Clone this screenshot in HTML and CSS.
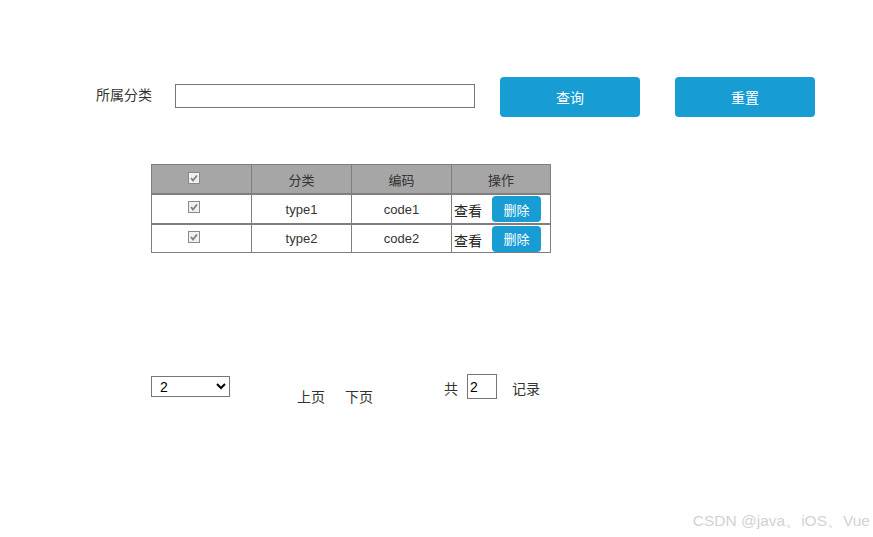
FILE: index.html
```html
<!DOCTYPE html>
<html>
<head>
<meta charset="utf-8">
<link rel="stylesheet" href="styles.css">
</head>
<body>
<div class="page">
  <div class="search">
    <span class="label">所属分类</span>
    <input class="search-input" type="text">
    <button class="btn btn-query">查询</button>
    <button class="btn btn-reset">重置</button>
  </div>

  <table class="grid">
    <tr class="head">
      <th><span class="cb"></span></th>
      <th>分类</th>
      <th>编码</th>
      <th class="last">操作</th>
    </tr>
    <tr>
      <td><span class="cb"></span></td>
      <td>type1</td>
      <td>code1</td>
      <td class="ops last"><span class="view">查看</span><button class="del">删除</button></td>
    </tr>
    <tr>
      <td><span class="cb"></span></td>
      <td>type2</td>
      <td>code2</td>
      <td class="ops last"><span class="view">查看</span><button class="del">删除</button></td>
    </tr>
  </table>

  <div class="pager">
    <select class="size"><option>2</option></select>
    <span class="link prev">上页</span>
    <span class="link next">下页</span>
    <span class="total">共</span>
    <input class="count" type="text" value="2">
    <span class="rec">记录</span>
  </div>
</div>
<div class="watermark">CSDN @java、iOS、Vue</div>
</body>
</html>
```

FILE: styles.css
```css
html, body {
  margin: 0;
  padding: 0;
  background: #fff;
}
body {
  font-family: "Noto Sans CJK SC", "Liberation Sans", sans-serif;
  color: #333;
  width: 873px;
  height: 537px;
  overflow: hidden;
  position: relative;
}
.page {
  padding-top: 77px;
}
.search {
  display: flex;
  align-items: center;
  height: 40px;
  padding-left: 96px;
}
.label {
  font-size: 14px;
  color: #333;
  width: 79px;
  margin-top: -7px;
}
.search-input {
  width: 300px;
  height: 24px;
  box-sizing: border-box;
  border: 1px solid #767676;
  margin: 0 25px 0 0;
  padding: 0;
  position: relative;
  top: -1px;
}
.btn {
  width: 140px;
  height: 40px;
  border: none;
  border-radius: 4px;
  background: #179cd4;
  color: #fff;
  font-family: "Noto Sans CJK SC", sans-serif;
  font-size: 14px;
  padding: 0;
}
.btn-query {
  margin-right: 35px;
}
.grid {
  margin: 47px 0 0 151px;
  border-collapse: collapse;
  font-family: "Liberation Sans", "Noto Sans CJK SC", sans-serif;
  font-size: 13px;
  color: #333;
}
.grid th, .grid td {
  width: 99px;
  border-left: 1px solid #7f7f7f;
  border-right: 1px solid #7f7f7f;
  border-top: 2px solid #7f7f7f;
  text-align: center;
  padding: 0;
}
.grid th.last, .grid td.last {
  width: 98px;
}
.grid tr:last-child td {
  border-bottom: 1px solid #7f7f7f;
}
.grid th {
  background: #a6a6a6;
  font-weight: normal;
  height: 28px;
  border-top: 1px solid #7f7f7f;
  font-family: "Noto Sans CJK SC", sans-serif;
  color: #333;
}
.grid td {
  height: 28px;
}
.grid tr:last-child td {
  height: 27px;
}
.cb {
  display: inline-block;
  width: 10px;
  height: 10px;
  border: 1px solid #8a8a8a;
  background: #f0f0f0 url("data:image/svg+xml,%3Csvg xmlns='http://www.w3.org/2000/svg' width='10' height='10'%3E%3Cpath d='M2 5 L4 7.5 L8 2.5' fill='none' stroke='%23808080' stroke-width='1.8'/%3E%3C/svg%3E") no-repeat center;
  vertical-align: middle;
  position: relative;
  top: -3px;
  left: -8px;
}
.grid td.ops {
  text-align: left;
  white-space: nowrap;
}
.view {
  font-family: "Noto Sans CJK SC", sans-serif;
  font-size: 14px;
  color: #222;
  margin-left: 2px;
  vertical-align: middle;
  position: relative;
  top: 1px;
}
.del {
  width: 49px;
  height: 26px;
  border: none;
  border-radius: 4px;
  background: #179cd4;
  color: #fff;
  font-family: "Noto Sans CJK SC", sans-serif;
  font-size: 13px;
  padding: 0;
  margin-left: 10px;
  vertical-align: middle;
}
.pager {
  display: flex;
  align-items: flex-start;
  margin: 121px 0 0 151px;
  font-size: 14px;
  color: #333;
}
.size {
  width: 79px;
  height: 21px;
  margin: 2px 0 0 0;
  border: 1px solid #767676;
  border-radius: 0;
  background: #fff;
  font-family: "Liberation Sans", sans-serif;
  font-size: 14px;
  color: #000;
  padding: 0 0 0 4px;
}
.link {
  margin-top: 13px;
  line-height: 18px;
}
.prev {
  margin-left: 67px;
}
.next {
  margin-left: 20px;
}
.total {
  margin-left: 71px;
  margin-top: 5px;
  line-height: 18px;
}
.count {
  width: 30px;
  height: 25px;
  box-sizing: border-box;
  border: 1px solid #767676;
  margin: 0 0 0 9px;
  padding: 0 0 0 2px;
  font-family: "Liberation Sans", sans-serif;
  font-size: 14px;
  color: #000;
}
.rec {
  margin-left: 15px;
  margin-top: 5px;
  line-height: 18px;
}
.watermark {
  position: absolute;
  right: 3px;
  top: 511px;
  font-family: "Liberation Sans", sans-serif;
  font-size: 15.5px;
  color: #d2d2d2;
}
```
